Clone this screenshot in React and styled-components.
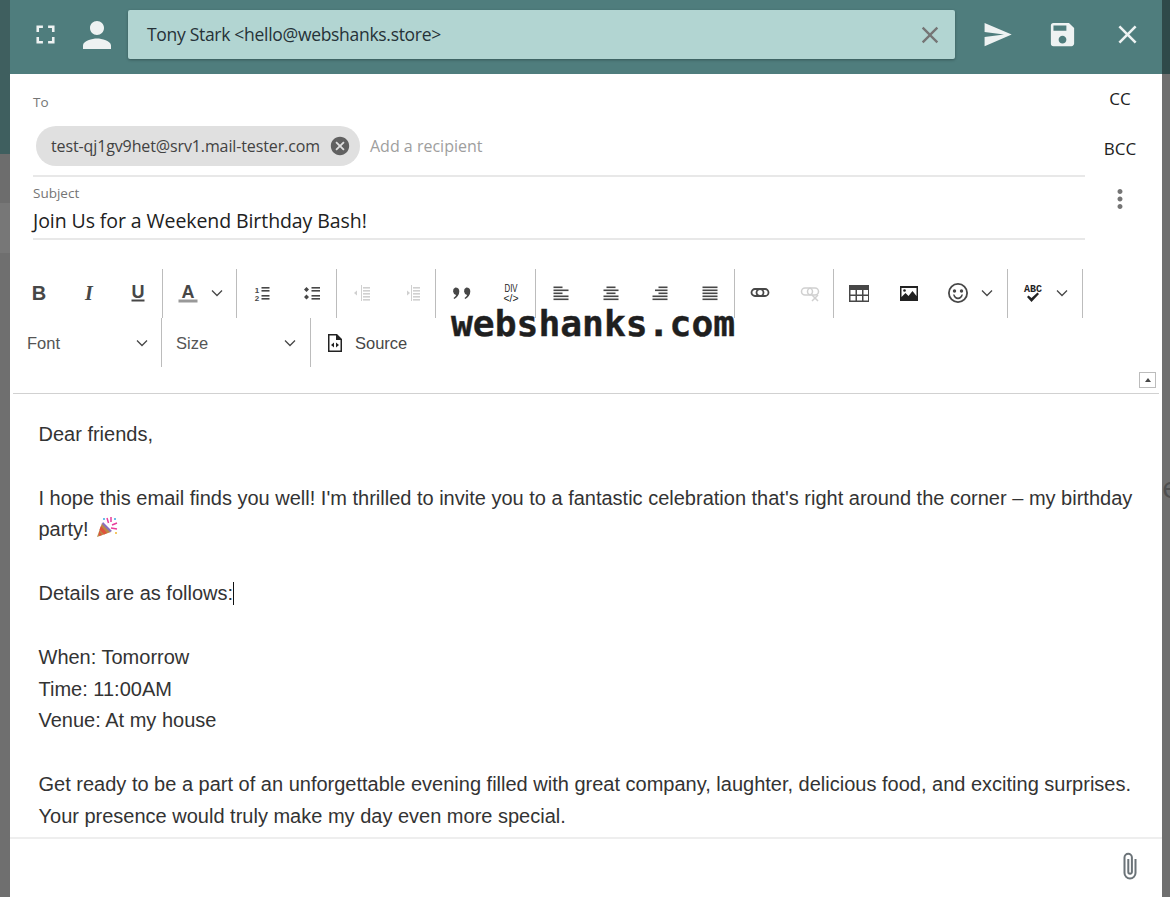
import React from 'react';
import styled, { createGlobalStyle } from 'styled-components';
import { MdFullscreen, MdPerson, MdSend, MdSave, MdClose, MdCancel, MdMoreVert } from 'react-icons/md';

const GlobalStyle = createGlobalStyle`
  html, body {
    margin: 0;
    padding: 0;
    background: #fff;
  }
`;

const uiFont = `"Open Sans", "Noto Sans", sans-serif`;
const editorFont = `"Liberation Sans", Arial, sans-serif`;

const Page = styled.div`
  display: flex;
  width: 1170px;
  height: 897px;
  overflow: hidden;
`;

const Backdrop = styled.div`
  display: flex;
  flex-direction: column;
  flex: 0 0 ${({ $width }) => $width}px;
  overflow: hidden;
  background: #6f6f6f;
`;

const BackdropBand = styled.div`
  height: ${({ $height }) => $height}px;
  background: ${({ $color }) => $color};
`;

const BackdropText = styled.div`
  padding-top: 398px;
  font: 30px/30px ${uiFont};
  color: #4f4f4f;
  white-space: nowrap;
`;

const Composer = styled.div`
  display: flex;
  flex-direction: column;
  flex: 1;
  min-width: 0;
  background: #fff;
`;

const Header = styled.header`
  display: flex;
  align-items: flex-start;
  height: 74px;
  flex: none;
  box-sizing: border-box;
  padding-top: 10px;
  background: #4f7d7d;
`;

const HeaderIcon = styled.button`
  display: flex;
  align-items: center;
  justify-content: center;
  flex: none;
  width: ${({ $width }) => $width}px;
  height: 49px;
  margin: 0 ${({ $after }) => $after || 0}px 0 ${({ $before }) => $before || 0}px;
  padding: 0;
  border: 0;
  background: none;
  color: rgba(255, 255, 255, 0.9);

  svg {
    flex: none;
  }
`;

const FromBar = styled.div`
  display: flex;
  align-items: center;
  justify-content: space-between;
  flex: none;
  width: 827px;
  height: 49px;
  box-sizing: border-box;
  padding: 0 11px 2px 19px;
  border-radius: 2px;
  background: #b2d5d2;
  box-shadow: 0 1px 3px rgba(0, 0, 0, 0.3);
  font: 17.5px ${uiFont};
  letter-spacing: -0.3px;
  color: #263238;
`;

const BarClose = styled.span`
  display: flex;
  margin-top: 2px;
  color: #757575;
`;

const Fields = styled.section`
  display: flex;
  height: 195px;
  flex: none;
`;

const FieldColumn = styled.div`
  width: 1052px;
  margin-left: 23px;
`;

const FieldLabel = styled.div`
  font: 13.5px/18px ${uiFont};
  color: #757575;
`;

const ToLabel = styled(FieldLabel)`
  padding-top: 19px;
`;

const Recipients = styled.div`
  display: flex;
  align-items: center;
  gap: 10px;
  height: 66px;
  box-sizing: border-box;
  padding: 15px 0 9px 3px;
  margin-bottom: 7px;
  border-bottom: 2px solid #e8e8e8;
`;

const Chip = styled.div`
  display: flex;
  align-items: center;
  justify-content: space-between;
  width: 324px;
  height: 40px;
  box-sizing: border-box;
  padding: 0 9px 0 15px;
  border-radius: 20px;
  background: #e0e0e0;
  font: 16px ${uiFont};
  letter-spacing: -0.12px;
  color: #424242;
`;

const ChipClose = styled.span`
  display: flex;
  color: #616161;
`;

const Placeholder = styled.span`
  font: 16px ${uiFont};
  color: #9e9e9e;
`;

const SubjectValue = styled.div`
  height: 38px;
  box-sizing: border-box;
  padding-top: 4px;
  border-bottom: 2px solid #e8e8e8;
  font: 19.5px/30px ${uiFont};
  letter-spacing: -0.08px;
  color: #212121;
`;

const SideActions = styled.div`
  display: flex;
  flex-direction: column;
  align-items: center;
  width: 70px;
`;

const SideAction = styled.div`
  display: flex;
  align-items: center;
  justify-content: center;
  height: 50px;
  padding-bottom: ${({ $lift }) => $lift || 0}px;
  box-sizing: border-box;
  font: 17px ${uiFont};
  color: ${({ $muted }) => ($muted ? '#757575' : '#212121')};
`;

const Editor = styled.div`
  position: relative;
  flex: none;
  margin: 0 3px 0 3px;
  height: 125px;
  box-sizing: border-box;
  padding-left: 1px;
  border-bottom: 1px solid #d1d1d1;
`;

const ToolRow = styled.div`
  display: flex;
  height: 49px;
`;

const Group = styled.div`
  display: flex;
  align-items: center;
  width: ${({ $width }) => $width}px;
  box-sizing: border-box;
  border-right: 1px solid #bcbcbc;
`;

const ToolButton = styled.span`
  display: flex;
  align-items: center;
  justify-content: center;
  flex: 0 0 49.75px;
`;

const ToolIcon = styled.svg`
  width: 20px;
  height: 20px;
  margin-top: -2px;
  overflow: visible;
  fill: ${({ $dark }) => ($dark ? '#222' : '#474747')};
  opacity: ${({ $dim }) => ($dim ? 0.25 : 1)};
  font-family: ${editorFont};
`;

const ToolChevron = styled.svg`
  width: 12px;
  height: 8px;
  margin-left: ${({ $left }) => $left || 0}px;
  margin-top: -2px;
  fill: none;
  stroke: #474747;
  stroke-width: 1.3;
`;

const ComboGroup = styled(Group)`
  justify-content: space-between;
  padding: 2px ${({ $right }) => $right}px 0 ${({ $left }) => $left}px;
  font: 16.5px ${editorFont};
  color: #555;
`;

const SourceButton = styled.span`
  display: flex;
  align-items: center;
  gap: 10px;
  padding: 2px 0 0 14px;
  font: 16.5px ${editorFont};
  color: #474747;
`;

const CollapseButton = styled.span`
  position: absolute;
  right: 3px;
  bottom: 5px;
  display: flex;
  align-items: center;
  justify-content: center;
  width: 17px;
  height: 16px;
  box-sizing: border-box;
  border: 1px solid #bcbcbc;
  &::before {
    content: '';
    border: 3.5px solid transparent;
    border-top: 0;
    border-bottom: 4px solid #474747;
  }
`;

const Watermark = styled.div`
  position: absolute;
  left: 438px;
  top: 33px;
  font: bold 36.3px/44px "DejaVu Sans Mono", monospace;
  -webkit-text-stroke: 0.4px #1f1f1f;
  color: #1f1f1f;
  white-space: pre;
`;

const Body = styled.div`
  flex: 1;
  min-height: 0;
  overflow: hidden;
  box-sizing: border-box;
  padding: 25px 26px 0 28.5px;
  font: 20px/31.83px ${editorFont};
  color: #333;
`;

const Line = styled.div`
  min-height: 31.83px;
`;

const Caret = styled.span`
  display: inline-block;
  width: 0;
  height: 23px;
  border-left: 1px solid #111;
  vertical-align: -5px;
`;

const Party = styled.svg`
  width: 22px;
  height: 22px;
  margin-left: 7px;
  vertical-align: -2px;
`;

const Footer = styled.footer`
  display: flex;
  align-items: center;
  justify-content: flex-end;
  flex: none;
  height: 60px;
  box-sizing: border-box;
  padding: 0 22px 4px 0;
  border-top: 2px solid #eee;
`;

const ClipIcon = styled.svg`
  width: 20px;
  height: 30px;
  fill: none;
  stroke: #6b7378;
  stroke-width: 2;
`;

const Chevron = () => (
  <ToolChevron viewBox="0 0 12 8" $left={-2}>
    <path d="M1 1.5l5 5 5-5" />
  </ToolChevron>
);

const Lines = ({ rows }) => rows.map(([x, y, w], i) => <rect key={i} x={x} y={y} width={w} height="1.6" />);

const icons = {
  bold: <ToolIcon viewBox="0 0 20 20"><text x="10" y="17" fontSize="20" fontWeight="700" textAnchor="middle">B</text></ToolIcon>,
  italic: <ToolIcon viewBox="0 0 20 20"><text x="10" y="17" fontSize="20" fontWeight="700" fontStyle="italic" fontFamily="Liberation Serif" textAnchor="middle">I</text></ToolIcon>,
  underline: (
    <ToolIcon viewBox="0 0 20 20">
      <text x="10" y="15" fontSize="18" fontWeight="700" textAnchor="middle">U</text>
      <rect x="3.5" y="16.5" width="13" height="2" />
    </ToolIcon>
  ),
  color: (
    <ToolIcon viewBox="0 0 20 20">
      <text x="10" y="15" fontSize="18" fontWeight="700" textAnchor="middle">A</text>
      <rect x="0.5" y="16.5" width="19" height="3" fill="#999" />
    </ToolIcon>
  ),
  numbered: (
    <ToolIcon viewBox="0 0 20 20">
      <text x="5" y="9.5" fontSize="8" fontWeight="700" textAnchor="middle">1</text>
      <text x="5" y="18" fontSize="8" fontWeight="700" textAnchor="middle">2</text>
      <Lines rows={[[9.5, 4, 8], [9.5, 7, 8], [9.5, 12, 8], [9.5, 15, 8]]} />
    </ToolIcon>
  ),
  bulleted: (
    <ToolIcon viewBox="0 0 20 20">
      <path d="M4.5 4l2.5 2.5-2.5 2.5-2.5-2.5zM4.5 11.5l2.5 2.5-2.5 2.5-2.5-2.5z" />
      <Lines rows={[[9.5, 4, 8.5], [9.5, 7, 8.5], [9.5, 12, 8.5], [9.5, 15, 8.5]]} />
    </ToolIcon>
  ),
  outdent: (
    <ToolIcon viewBox="0 0 20 20" $dim>
      <path d="M2 10l3-2.5v5z" />
      <rect x="9" y="2" width="1" height="16" />
      <Lines rows={[[11, 4, 7], [11, 7, 7], [11, 10, 7], [11, 13, 7], [11, 16, 7]]} />
    </ToolIcon>
  ),
  indent: (
    <ToolIcon viewBox="0 0 20 20" $dim>
      <path d="M8 10l-3-2.5v5z" />
      <rect x="9" y="2" width="1" height="16" />
      <Lines rows={[[11, 4, 7], [11, 7, 7], [11, 10, 7], [11, 13, 7], [11, 16, 7]]} />
    </ToolIcon>
  ),
  quote: (
    <ToolIcon viewBox="0 0 20 20">
      <path d="M4.300 4.500a4 4 0 0 1 4 4c0 3.500-2.400 6-5 7.500l-.8-1c1.400-1 2.300-2 2.600-3A4 4 0 0 1 4.300 4.500zM15.300 4.500a4 4 0 0 1 4 4c0 3.500-2.400 6-5 7.500l-.8-1c1.400-1 2.300-2 2.600-3a4 4 0 0 1-.8-7.500z" />
    </ToolIcon>
  ),
  div: (
    <ToolIcon viewBox="0 0 20 20" $dark>
      <text x="10" y="9" fontSize="11" textAnchor="middle" textLength="13" lengthAdjust="spacingAndGlyphs">DIV</text>
      <text x="10" y="19" fontSize="11" textAnchor="middle" textLength="15" lengthAdjust="spacingAndGlyphs">{'</>'}</text>
    </ToolIcon>
  ),
  left: <ToolIcon viewBox="0 0 20 20"><Lines rows={[[2.500, 3.500, 9], [2.500, 6.500, 15], [2.500, 9.500, 9], [2.500, 12.500, 15], [2.500, 15.500, 15]]} /></ToolIcon>,
  center: <ToolIcon viewBox="0 0 20 20"><Lines rows={[[5.500, 3.500, 9], [2.500, 6.500, 15], [5.500, 9.500, 9], [2.500, 12.500, 15], [2.500, 15.500, 15]]} /></ToolIcon>,
  right: <ToolIcon viewBox="0 0 20 20"><Lines rows={[[8.500, 3.500, 9], [5, 6.500, 12.500], [8.500, 9.500, 9], [2.500, 12.500, 15], [2.500, 15.500, 15]]} /></ToolIcon>,
  justify: <ToolIcon viewBox="0 0 20 20"><Lines rows={[[2.500, 3.500, 15], [2.500, 6.500, 15], [2.500, 9.500, 15], [2.500, 12.500, 15], [2.500, 15.500, 15]]} /></ToolIcon>,
  link: (
    <ToolIcon viewBox="0 0 20 20" style={{ fill: 'none', stroke: '#474747', strokeWidth: 1.800 }}>
      <rect x="1.500" y="6" width="12" height="7" rx="3.500" />
      <rect x="6.500" y="6" width="12" height="7" rx="3.500" />
    </ToolIcon>
  ),
  unlink: (
    <ToolIcon viewBox="0 0 20 20" $dim style={{ fill: 'none', stroke: '#474747', strokeWidth: 1.500 }}>
      <rect x="1.500" y="5" width="11" height="7" rx="3.500" />
      <rect x="7.500" y="5" width="11" height="7" rx="3.500" />
      <path d="M12 12l6 6M18 12l-6 6" />
    </ToolIcon>
  ),
  table: (
    <ToolIcon viewBox="0 0 20 20">
      <path d="M0 2h20v17H0zM1.500 7v4.500h5V7zm6.500 0v4.500h5V7zm6.500 0v4.500h4.500V7zM1.500 13v4.500h5V13zm6.500 0v4.500h5V13zm6.500 0v4.500h4.500V13z" fillRule="evenodd" />
    </ToolIcon>
  ),
  image: (
    <ToolIcon viewBox="0 0 20 20" $dark>
      <path d="M1 3h18v15H1zM2.500 5v9l4-4 3 3 4-5 4 5V5z" fillRule="evenodd" />
      <circle cx="5.500" cy="7.500" r="1.300" />
    </ToolIcon>
  ),
  smiley: (
    <ToolIcon viewBox="0 0 20 20">
      <path d="M10 0a10 10 0 1 0 0 20 10 10 0 0 0 0-20zm0 1.800a8.200 8.200 0 1 1 0 16.400 8.200 8.200 0 0 1 0-16.400z" fillRule="evenodd" />
      <circle cx="6.500" cy="8" r="1.700" />
      <circle cx="13.500" cy="8" r="1.700" />
      <path d="M5 11.500h1.500c.7 2 2 3 3.500 3s2.800-1 3.500-3H15c-.7 3-2.600 4.800-5 4.800S5.700 14.500 5 11.500z" />
    </ToolIcon>
  ),
  spell: (
    <ToolIcon viewBox="0 0 20 20" $dark>
      <text x="10" y="9" fontSize="11" fontWeight="700" textAnchor="middle" textLength="18" lengthAdjust="spacingAndGlyphs" fontFamily="Liberation Mono">ABC</text>
      <path d="M4 14l1.500-1.500 3 2.500 6-5.500 1.500 1.500-7.500 8z" />
    </ToolIcon>
  ),
  source: (
    <ToolIcon viewBox="0 0 20 20" $dark>
      <path d="M3 1h9l5 5v13H3zM4.500 2.500v15h11V7H11V2.500z" fillRule="evenodd" />
      <path d="M9 9.500v5L6 12zM11 9.500v5l3-2.500z" />
    </ToolIcon>
  ),
};

const toolRow = [
  { width: 149, tools: ['bold', 'italic', 'underline'] },
  { width: 74, tools: ['color'], menu: true },
  { width: 100, tools: ['numbered', 'bulleted'] },
  { width: 99, tools: ['outdent', 'indent'] },
  { width: 100, tools: ['quote', 'div'] },
  { width: 199, tools: ['left', 'center', 'right', 'justify'] },
  { width: 99, tools: ['link', 'unlink'] },
  { width: 174, tools: ['table', 'image', 'smiley'], menu: true },
  { width: 75, tools: ['spell'], menu: true },
];

const App = () => (
  <>
    <GlobalStyle />
    <Page>
      <Backdrop $width={10}>
        <BackdropBand $height={154} $color="#3f5f5f" />
        <BackdropBand $height={49} $color="#6d6d6d" />
        <BackdropBand $height={50} $color="#777" />
      </Backdrop>

      <Composer>
        <Header>
          <HeaderIcon $width={70}><MdFullscreen size={31} /></HeaderIcon>
          <HeaderIcon $width={34} $after={14}><MdPerson size={42} /></HeaderIcon>
          <FromBar>
            <span>Tony Stark &lt;hello@webshanks.store&gt;</span>
            <BarClose><MdClose size={28} /></BarClose>
          </FromBar>
          <HeaderIcon $width={84}><MdSend size={31} /></HeaderIcon>
          <HeaderIcon $width={46}><MdSave size={31} /></HeaderIcon>
          <HeaderIcon $width={70} $before={7}><MdClose size={31} /></HeaderIcon>
        </Header>

        <Fields>
          <FieldColumn>
            <ToLabel>To</ToLabel>
            <Recipients>
              <Chip>
                <span>test-qj1gv9het@srv1.mail-tester.com</span>
                <ChipClose><MdCancel size={22} /></ChipClose>
              </Chip>
              <Placeholder>Add a recipient</Placeholder>
            </Recipients>
            <FieldLabel>Subject</FieldLabel>
            <SubjectValue>Join Us for a Weekend Birthday Bash!</SubjectValue>
          </FieldColumn>
          <SideActions>
            <SideAction $lift={2}>CC</SideAction>
            <SideAction $lift={2}>BCC</SideAction>
            <SideAction $muted><MdMoreVert size={30} /></SideAction>
          </SideActions>
        </Fields>

        <Editor>
          <ToolRow>
            {toolRow.map((group, i) => (
              <Group key={i} $width={group.width}>
                {group.tools.map((tool) => <ToolButton key={tool}>{icons[tool]}</ToolButton>)}
                {group.menu && <Chevron />}
              </Group>
            ))}
          </ToolRow>
          <ToolRow>
            <ComboGroup $width={148} $left={13} $right={13}>Font<Chevron /></ComboGroup>
            <ComboGroup $width={149} $left={14} $right={14}>Size<Chevron /></ComboGroup>
            <SourceButton>{icons.source}Source</SourceButton>
          </ToolRow>
          <Watermark>webshanks.com</Watermark>
          <CollapseButton />
        </Editor>

        <Body>
          <Line>Dear friends,</Line>
          <Line />
          <Line>
            I hope this email finds you well! I'm thrilled to invite you to a fantastic celebration that's right around the corner – my birthday party!
            <Party viewBox="0 0 22 22">
              <path d="M1 21l5-14 9 9z" fill="#b98a4a" />
              <path d="M3 15l3 4-3 1zM5 10l6 7-3 1.500-4.500-5z" fill="#e0533d" />
              <path d="M7 6l9 9-2 1-8-8z" fill="#8a6fc0" />
              <path d="M11 2l1.500 5M15 1v5M16 9l5-2M15 12l6 1" stroke="#e83e9c" strokeWidth="1.500" fill="none" />
              <circle cx="8" cy="3" r="1" fill="#3aa8e0" />
              <circle cx="19" cy="3" r="1" fill="#3aa8e0" />
              <circle cx="20" cy="17" r="1" fill="#f2b632" />
            </Party>
          </Line>
          <Line />
          <Line>Details are as follows:<Caret /></Line>
          <Line />
          <Line>When: Tomorrow</Line>
          <Line>Time: 11:00AM</Line>
          <Line>Venue: At my house</Line>
          <Line />
          <Line>Get ready to be a part of an unforgettable evening filled with great company, laughter, delicious food, and exciting surprises. Your presence would truly make my day even more special.</Line>
        </Body>

        <Footer>
          <ClipIcon viewBox="0 0 20 30">
            <path d="M15.500 8v14a5.500 5.500 0 0 1-11 0V6.500a3.700 3.700 0 0 1 7.400 0V21a1.800 1.800 0 0 1-3.600 0V8" />
          </ClipIcon>
        </Footer>
      </Composer>

      <Backdrop $width={8}>
        <BackdropBand $height={74} $color="#2f4a4a" />
        <BackdropText>e</BackdropText>
      </Backdrop>
    </Page>
  </>
);

export default App;
